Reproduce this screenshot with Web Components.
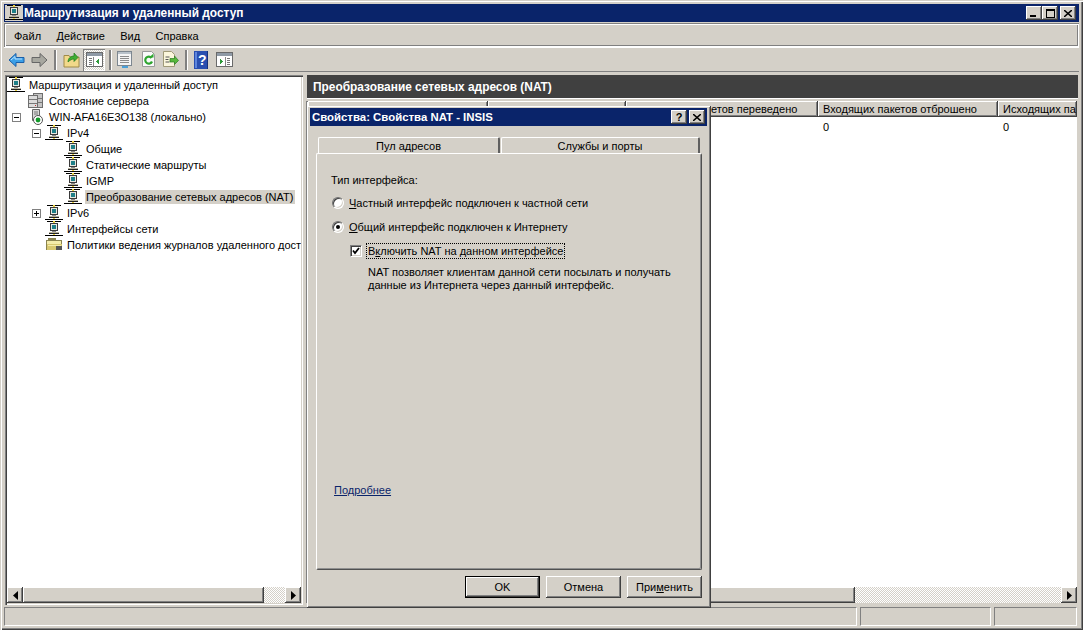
<!DOCTYPE html>
<html lang="ru">
<head>
<meta charset="utf-8">
<title>Маршрутизация и удаленный доступ</title>
<style>
  html, body { margin: 0; padding: 0; background: #d4d0c8; }
  body { font: 11px "Liberation Sans", "Noto Sans", sans-serif; color: #000; }
</style>
</head>
<body>
<app-window>
  <title-bar slot="title" icon="net" buttons="min max close" style="--title-size:11.9px">Маршрутизация и удаленный доступ</title-bar>
  <menu-bar slot="menu"></menu-bar>
  <tool-bar slot="tools"></tool-bar>
  <tree-pane slot="tree">
    <tree-node indent="0" icon="net">Маршрутизация и удаленный доступ</tree-node>
    <tree-node indent="20" icon="server">Состояние сервера</tree-node>
    <tree-node indent="5" gap="6" exp="minus" icon="serverok">WIN-AFA16E3O138 (локально)</tree-node>
    <tree-node indent="25" gap="4" exp="minus" icon="net">IPv4</tree-node>
    <tree-node indent="57" icon="net">Общие</tree-node>
    <tree-node indent="57" icon="net">Статические маршруты</tree-node>
    <tree-node indent="57" icon="net">IGMP</tree-node>
    <tree-node indent="57" icon="net" selected>Преобразование сетевых адресов (NAT)</tree-node>
    <tree-node indent="25" gap="4" exp="plus" icon="net">IPv6</tree-node>
    <tree-node indent="38" icon="net">Интерфейсы сети</tree-node>
    <tree-node indent="38" icon="folder">Политики ведения журналов удаленного доступа</tree-node>
  </tree-pane>
  <list-pane slot="list"></list-pane>
  <status-bar slot="status"></status-bar>
  <nat-dialog slot="dialog"></nat-dialog>
</app-window>

<script>
// значки
const ICONS_SVG = {
  net: `<svg width="18" height="16" viewBox="0 0 18 16" shape-rendering="crispEdges">
    <rect x="2" y="0" width="14" height="1" fill="#000"/><rect x="8" y="0" width="2" height="2" fill="#e8d040"/>
    <rect x="5" y="2" width="8" height="8" fill="#3a3a3a"/><rect x="6" y="3" width="6" height="6" fill="#e8e8e0"/>
    <rect x="7" y="4" width="4" height="4" fill="#1f7f88"/><rect x="7" y="10" width="4" height="1" fill="#888"/>
    <rect x="4" y="11" width="10" height="2" fill="#b9b49f"/><rect x="4" y="12" width="10" height="1" fill="#222"/>
    <rect x="8" y="13" width="2" height="2" fill="#e8d040"/><rect x="0" y="14" width="18" height="1" fill="#000"/></svg>`,
  server: `<svg width="18" height="16" viewBox="0 0 18 16" shape-rendering="crispEdges">
    <rect x="6" y="0" width="10" height="15" fill="#6e6e6e"/><rect x="7" y="1" width="8" height="13" fill="#c4c4c4"/>
    <rect x="1" y="2" width="10" height="13" fill="#6e6e6e"/><rect x="2" y="3" width="8" height="11" fill="#dcdcdc"/>
    <rect x="2" y="6" width="8" height="1" fill="#777"/><rect x="2" y="10" width="8" height="1" fill="#777"/>
    <rect x="11" y="5" width="4" height="1" fill="#777"/><rect x="11" y="9" width="4" height="1" fill="#777"/>
    <rect x="8" y="12" width="1" height="1" fill="#c03030"/></svg>`,
  serverok: `<svg width="18" height="16" viewBox="0 0 18 16">
    <path d="M5.5.5h7v11h-7z" fill="#d8d8d8" stroke="#666"/><path d="M7 3h4M7 5h4" stroke="#777"/>
    <circle cx="11" cy="11" r="4.5" fill="#fff" stroke="#555"/><circle cx="11" cy="11" r="2.4" fill="#129a2a"/></svg>`,
  folder: `<svg width="18" height="16" viewBox="0 0 18 16" shape-rendering="crispEdges">
    <rect x="3" y="1" width="8" height="2" fill="#8a8450"/><rect x="1" y="3" width="16" height="10" fill="#8a8450"/>
    <rect x="2" y="4" width="14" height="3" fill="#f4ecaa"/><rect x="2" y="7" width="15" height="6" fill="#d8c870"/>
    <rect x="3" y="8" width="13" height="1" fill="#f4ecaa"/><rect x="11" y="9" width="6" height="4" fill="#555"/></svg>`,
  back: `<svg width="17" height="16" viewBox="0 0 17 16"><path d="M1 8l7-6.500v4h8v5H8v4z" fill="#3ca0e8" stroke="#1b5fa8"/><path d="M3 8l4-3.500v2.500h7" fill="none" stroke="#b8e2ff"/></svg>`,
  forward: `<svg width="17" height="16" viewBox="0 0 17 16"><path d="M16 8L9 1.500v4H1v5h8v4z" fill="#a8a8a0" stroke="#666"/></svg>`,
  up: `<svg width="17" height="17" viewBox="0 0 17 17"><path d="M1 4.500h5l1 1.500h9v10H1z" fill="#f2d98a" stroke="#a08a48"/><path d="M5 11c0-4 3-6 6-6V2l4 4.500-4 4V8c-2 0-4 1-6 3z" fill="#3fae35" stroke="#1c7a1c" stroke-width=".7"/></svg>`,
  panel: `<svg width="17" height="15" viewBox="0 0 17 15" shape-rendering="crispEdges">
    <rect x=".5" y=".5" width="16" height="14" fill="#fff" stroke="#6a6a6a"/><rect x="1" y="1" width="15" height="3" fill="#8f9aa6"/>
    <rect x="3" y="6" width="3" height="1" fill="#777"/><rect x="3" y="8" width="3" height="1" fill="#777"/><rect x="3" y="10" width="3" height="1" fill="#777"/><rect x="3" y="12" width="3" height="1" fill="#777"/>
    <rect x="7" y="5" width="1" height="9" fill="#888"/><path d="M13 7v5l-3-2.500z" fill="#2f9a3a"/></svg>`,
  panelright: `<svg width="17" height="15" viewBox="0 0 17 15" shape-rendering="crispEdges">
    <rect x=".5" y=".5" width="16" height="14" fill="#fff" stroke="#6a6a6a"/><rect x="1" y="1" width="15" height="3" fill="#8f9aa6"/>
    <rect x="11" y="6" width="3" height="1" fill="#777"/><rect x="11" y="8" width="3" height="1" fill="#777"/><rect x="11" y="10" width="3" height="1" fill="#777"/><rect x="11" y="12" width="3" height="1" fill="#777"/>
    <rect x="9" y="5" width="1" height="9" fill="#888"/><path d="M4 7v5l3-2.500z" fill="#2f9a3a"/></svg>`,
  props: `<svg width="17" height="17" viewBox="0 0 17 17" shape-rendering="crispEdges">
    <rect x="1.500" y=".5" width="14" height="14" fill="#f4f4f4" stroke="#7d8790"/><rect x="2" y="1" width="13" height="2" fill="#b9c2ca"/>
    <rect x="4" y="5" width="9" height="1" fill="#8a8a8a"/><rect x="4" y="7" width="9" height="1" fill="#8a8a8a"/><rect x="4" y="9" width="9" height="1" fill="#8a8a8a"/><rect x="4" y="11" width="9" height="1" fill="#8a8a8a"/>
    <rect x="6" y="15" width="6" height="2" fill="#4aa0d8"/></svg>`,
  refresh: `<svg width="17" height="17" viewBox="0 0 17 17"><path d="M2.500.5h9l3 3v12h-12z" fill="#fafafa" stroke="#9a9a9a"/><path d="M11.500 7a3.500 3.500 0 1 0 .5 3.500" fill="none" stroke="#2fa52f" stroke-width="2.200"/><path d="M9 6.500h4.500V2.500z" fill="#2fa52f"/></svg>`,
  exportlist: `<svg width="17" height="17" viewBox="0 0 17 17"><path d="M1.500.5h8l3 3v12h-11z" fill="#fbf6dc" stroke="#a09a78"/><path d="M3.500 6h4M3.500 8.500h3M3.500 11h4" stroke="#555"/><path d="M8 7.500h4.500V5l4 4.500-4 4V11H8z" fill="#57b83c" stroke="#2c7d22" stroke-width=".7"/></svg>`,
  help: `<svg width="14" height="18" viewBox="0 0 14 18" shape-rendering="crispEdges"><rect width="14" height="18" fill="#2a4fb0"/><rect x="1" y="1" width="2" height="16" fill="#5f86dc"/><rect x="13" width="1" height="18" fill="#16307c"/></svg>`
};

// окно приложения
const appWindowTemplate = document.createElement("template");
appWindowTemplate.innerHTML = `
  <style>
    :host {
      display: flex; flex-direction: column; position: relative; box-sizing: border-box;
      width: 1083px; height: 630px; padding: 4px 4px 2px 4px; overflow: hidden; background: #d4d0c8;
      box-shadow: inset 1px 1px #d4d0c8, inset 2px 2px #fff, inset -1px -1px #404040, inset -2px -2px #808080;
    }
    .main { display: flex; height: 531px; margin-top: 3px; gap: 2px; padding-left: 1px; }
  </style>
  <slot name="title"></slot>
  <slot name="menu"></slot>
  <slot name="tools"></slot>
  <div class="main"><slot name="tree"></slot><slot name="list"></slot></div>
  <slot name="status"></slot>
  <slot name="dialog"></slot>
`;
class AppWindow extends HTMLElement {
  constructor() {
    super();
    this._shadowRoot = this.attachShadow({ mode: "open" });
    this._shadowRoot.appendChild(appWindowTemplate.content.cloneNode(true));
  }
}

// кнопка заголовка
const captionButtonTemplate = document.createElement("template");
captionButtonTemplate.innerHTML = `
  <style>
    :host {
      display: flex; align-items: center; justify-content: center; box-sizing: border-box;
      width: 16px; height: 14px; background: #d4d0c8; color: #000; font: bold 11px "Liberation Sans", sans-serif;
      box-shadow: inset -1px -1px #404040, inset 1px 1px #fff, inset -2px -2px #808080;
    }
  </style>
  <slot></slot>
`;
class CaptionButton extends HTMLElement {
  constructor() {
    super();
    this._shadowRoot = this.attachShadow({ mode: "open" });
    this._shadowRoot.appendChild(captionButtonTemplate.content.cloneNode(true));
    const kind = this.getAttribute("kind");
    const glyphs = {
      min: `<svg width="8" height="7" viewBox="0 0 8 7" shape-rendering="crispEdges"><rect x="0" y="5" width="6" height="2"/></svg>`,
      max: `<svg width="9" height="9" viewBox="0 0 9 9" fill="none" shape-rendering="crispEdges"><path d="M.5 1.500h8v7h-8z" stroke="#000"/><rect width="9" height="2" fill="#000"/></svg>`,
      close: `<svg width="8" height="7" viewBox="0 0 8 7"><path d="M0 0l8 7M8 0L0 7" stroke="#000" stroke-width="1.500"/></svg>`,
      help: `<span>?</span>`
    };
    this._shadowRoot.appendChild(document.createRange().createContextualFragment(glyphs[kind]));
  }
}

// заголовок окна
const titleBarTemplate = document.createElement("template");
titleBarTemplate.innerHTML = `
  <style>
    :host {
      display: flex; align-items: center; height: 18px; flex: none; background: #0a246a; color: #fff;
      font: bold var(--title-size, 11.4px) "Liberation Sans", sans-serif; padding-left: 1px; padding-right: 3px;
    }
    .ico { display: flex; width: 18px; flex: none; background: #d4d0c8; }
    .text { flex: 1; white-space: nowrap; overflow: hidden; padding-left: 1px; }
    .btns { display: flex; }
    caption-button[kind="close"] { margin-left: 2px; }
  </style>
  <span class="ico"></span><span class="text"><slot></slot></span><span class="btns"></span>
`;
class TitleBar extends HTMLElement {
  constructor() {
    super();
    this._shadowRoot = this.attachShadow({ mode: "open" });
    this._shadowRoot.appendChild(titleBarTemplate.content.cloneNode(true));
    const icon = this.getAttribute("icon");
    const ico = this._shadowRoot.querySelector(".ico");
    if (icon) ico.innerHTML = ICONS_SVG[icon];
    else ico.style.display = "none";
    this._shadowRoot.querySelector(".btns").innerHTML = (this.getAttribute("buttons") || "")
      .split(" ")
      .map((k) => `<caption-button kind="${k}"></caption-button>`)
      .join("");
  }
}

// меню
const menuBarTemplate = document.createElement("template");
menuBarTemplate.innerHTML = `
  <style>
    :host {
      display: flex; align-items: center; gap: 15.4px; box-sizing: border-box; flex: none; height: 24px;
      margin-top: 1px; padding: 1px 10px 0; color: #000; white-space: nowrap;
      box-shadow: inset 1px 1px #808080, inset -1px -1px #fff, inset 2px 2px #fff, inset -2px -2px #808080;
    }
  </style>
  <span>Файл</span><span>Действие</span><span>Вид</span><span>Справка</span>
`;
class MenuBar extends HTMLElement {
  constructor() {
    super();
    this._shadowRoot = this.attachShadow({ mode: "open" });
    this._shadowRoot.appendChild(menuBarTemplate.content.cloneNode(true));
  }
}

// панель инструментов
const toolBarTemplate = document.createElement("template");
toolBarTemplate.innerHTML = `
  <style>
    :host {
      display: flex; align-items: center; box-sizing: border-box; flex: none; height: 25px; padding-left: 4px;
      box-shadow: inset 0 1px #fff, inset 0 -1px #808080;
    }
    span { display: flex; align-items: center; justify-content: center; flex: none; }
    .sep { width: 2px; height: 20px; background: #808080; box-shadow: 1px 0 #fff; }
    .on {
      width: 22px; height: 22px;
      background: repeating-conic-gradient(#fff 0 25%, #d4d0c8 0 50%) 0 0/2px 2px;
      box-shadow: inset 1px 1px #808080, inset -1px -1px #fff;
    }
    .book { position: relative; }
    .book b { position: absolute; left: 4px; top: 1px; color: #fff; font: bold 14px "Liberation Sans", sans-serif; }
  </style>
  <span style="margin-right:6px">${ICONS_SVG.back}</span>
  <span style="margin-right:6px">${ICONS_SVG.forward}</span>
  <span class="sep" style="margin-right:7px"></span>
  <span style="margin-right:3px">${ICONS_SVG.up}</span>
  <span class="on" style="margin-right:4px">${ICONS_SVG.panel}</span>
  <span class="sep" style="margin-right:5px"></span>
  <span style="margin-right:7px">${ICONS_SVG.props}</span>
  <span style="margin-right:5px">${ICONS_SVG.refresh}</span>
  <span style="margin-right:6px">${ICONS_SVG.exportlist}</span>
  <span class="sep" style="margin-right:7px"></span>
  <span class="book" style="margin-right:8px">${ICONS_SVG.help}<b>?</b></span>
  <span>${ICONS_SVG.panelright}</span>
`;
class ToolBar extends HTMLElement {
  constructor() {
    super();
    this._shadowRoot = this.attachShadow({ mode: "open" });
    this._shadowRoot.appendChild(toolBarTemplate.content.cloneNode(true));
  }
}

// полоса прокрутки
const hScrollTemplate = document.createElement("template");
hScrollTemplate.innerHTML = `
  <style>
    :host {
      display: flex; flex: none; height: 16px;
      background: repeating-conic-gradient(#fff 0 25%, #d4d0c8 0 50%) 0 0/2px 2px;
    }
    .btn, .thumb {
      box-sizing: border-box; height: 16px; flex: none; background: #d4d0c8;
      box-shadow: inset -1px -1px #404040, inset 1px 1px #fff, inset -2px -2px #808080;
    }
    .btn { width: 16px; display: flex; align-items: center; justify-content: center; }
    .track { flex: 1; display: flex; }
  </style>
  <div class="btn"><svg width="5" height="9" viewBox="0 0 5 9"><path d="M5 0v9L0 4.500z"/></svg></div>
  <div class="track"><div class="thumb"></div></div>
  <div class="btn"><svg width="5" height="9" viewBox="0 0 5 9"><path d="M0 0v9l5-4.500z"/></svg></div>
`;
class HScroll extends HTMLElement {
  constructor() {
    super();
    this._shadowRoot = this.attachShadow({ mode: "open" });
    this._shadowRoot.appendChild(hScrollTemplate.content.cloneNode(true));
    this._shadowRoot.querySelector(".thumb").style.width = this.getAttribute("thumb") + "px";
  }
}

// дерево
const treePaneTemplate = document.createElement("template");
treePaneTemplate.innerHTML = `
  <style>
    :host {
      display: flex; flex-direction: column; box-sizing: border-box; flex: none; width: 298px; height: 530px;
      padding: 2px; background: #fff;
      box-shadow: inset 1px 1px #808080, inset 2px 2px #404040, inset -1px -1px #fff, inset -2px -2px #d4d0c8;
    }
    .nodes { flex: 1; overflow: hidden; }
  </style>
  <div class="nodes"><slot></slot></div>
  <h-scroll thumb="241"></h-scroll>
`;
class TreePane extends HTMLElement {
  constructor() {
    super();
    this._shadowRoot = this.attachShadow({ mode: "open" });
    this._shadowRoot.appendChild(treePaneTemplate.content.cloneNode(true));
  }
}

const treeNodeTemplate = document.createElement("template");
treeNodeTemplate.innerHTML = `
  <style>
    :host { display: flex; align-items: center; height: 16px; white-space: nowrap; }
    .exp {
      display: none; box-sizing: border-box; width: 9px; height: 9px; flex: none;
      border: 1px solid #808080; background: #fff; align-items: center; justify-content: center;
    }
    .ico { display: flex; width: 18px; flex: none; margin-right: 3px; }
    .label { padding-left: 1px; padding-right: 2px; }
    :host([selected]) .label { background: #d4d0c8; padding: 1px 2px 1px 1px; }
  </style>
  <span class="exp"></span><span class="ico"></span><span class="label"><slot></slot></span>
`;
class TreeNode extends HTMLElement {
  constructor() {
    super();
    this._shadowRoot = this.attachShadow({ mode: "open" });
    this._shadowRoot.appendChild(treeNodeTemplate.content.cloneNode(true));
    this.style.paddingLeft = (this.getAttribute("indent") || 0) + "px";
    this._shadowRoot.querySelector(".ico").innerHTML = ICONS_SVG[this.getAttribute("icon")];
    const exp = this.getAttribute("exp");
    if (exp) {
      const box = this._shadowRoot.querySelector(".exp");
      box.style.display = "flex";
      box.style.marginRight = this.getAttribute("gap") + "px";
      box.innerHTML = exp === "plus"
        ? `<svg width="5" height="5" viewBox="0 0 5 5" shape-rendering="crispEdges"><path d="M0 2h5v1H0zM2 0h1v5H2z"/></svg>`
        : `<svg width="5" height="5" viewBox="0 0 5 5" shape-rendering="crispEdges"><path d="M0 2h5v1H0z"/></svg>`;
    }
  }
}

// правая панель со списком
const listPaneTemplate = document.createElement("template");
listPaneTemplate.innerHTML = `
  <style>
    :host {
      display: flex; flex-direction: column; box-sizing: border-box; flex: 1; min-width: 0; height: 530px;
      padding: 0 2px 2px 1px;
    }
    .band {
      flex: none; height: 23px; margin-left: 1px; margin-right: -1px; background: #404040; color: #fff;
      font-weight: bold; font-size: 11.9px; line-height: 24px; padding-left: 6px; border-bottom: 1px solid #fff;
    }
    .list { flex: 1; display: flex; flex-direction: column; min-height: 0; background: #fff; margin-top: 2px;
      box-shadow: inset 1px 0 #808080, inset 0 1px #808080; padding-left: 2px; }
    .head { display: flex; flex: none; height: 16px; overflow: hidden; }
    .col {
      box-sizing: border-box; flex: none; overflow: hidden; white-space: nowrap; padding-left: 5px; line-height: 17px;
      background: #d4d0c8; box-shadow: inset -1px -1px #404040, inset 1px 1px #fff, inset -2px -2px #808080;
    }
    .rows { flex: 1; min-height: 0; }
    .row { display: flex; height: 18px; line-height: 21px; }
    .cell { flex: none; padding-left: 5px; box-sizing: border-box; }
    .c1 { width: 180px; } .c2 { width: 138px; } .c3 { width: 192px; } .c4 { width: 180px; } .c5 { width: 79px; }
    /* начало этой колонки закрыто диалогом */
    .col.c3 { padding-left: 85px; }
  </style>
  <div class="band">Преобразование сетевых адресов (NAT)</div>
  <div class="list">
    <div class="head">
      <div class="col c1"></div>
      <div class="col c2"></div>
      <div class="col c3">етов переведено</div>
      <div class="col c4">Входящих пакетов отброшено</div>
      <div class="col c5">Исходящих па</div>
    </div>
    <div class="rows">
      <div class="row">
        <div class="cell c1"></div><div class="cell c2"></div><div class="cell c3"></div>
        <div class="cell c4">0</div><div class="cell c5">0</div>
      </div>
    </div>
    <h-scroll thumb="531"></h-scroll>
  </div>
`;
class ListPane extends HTMLElement {
  constructor() {
    super();
    this._shadowRoot = this.attachShadow({ mode: "open" });
    this._shadowRoot.appendChild(listPaneTemplate.content.cloneNode(true));
  }
}

// строка состояния
const statusBarTemplate = document.createElement("template");
statusBarTemplate.innerHTML = `
  <style>
    :host { display: flex; gap: 3px; flex: none; height: 19px; margin-top: 1px; padding-right: 2px; }
    div { box-sizing: border-box; height: 19px; border: 1px solid; border-color: #808080 #fff #fff #808080; }
    .a { flex: 1; } .b { width: 131px; } .c { width: 83px; }
  </style>
  <div class="a"></div><div class="b"></div><div class="c"></div>
`;
class StatusBar extends HTMLElement {
  constructor() {
    super();
    this._shadowRoot = this.attachShadow({ mode: "open" });
    this._shadowRoot.appendChild(statusBarTemplate.content.cloneNode(true));
  }
}

// кнопка диалога
const dlgButtonTemplate = document.createElement("template");
dlgButtonTemplate.innerHTML = `
  <style>
    :host {
      display: flex; align-items: center; justify-content: center; box-sizing: border-box;
      width: 75px; height: 22px; background: #d4d0c8; color: #000;
      box-shadow: inset -1px -1px #404040, inset 1px 1px #fff, inset -2px -2px #808080;
    }
    :host([primary]) {
      box-shadow: inset 0 0 0 1px #000, inset -2px -2px #404040, inset 2px 2px #fff, inset -3px -3px #808080;
    }
  </style>
  <slot></slot>
`;
class DlgButton extends HTMLElement {
  constructor() {
    super();
    this._shadowRoot = this.attachShadow({ mode: "open" });
    this._shadowRoot.appendChild(dlgButtonTemplate.content.cloneNode(true));
  }
}

// переключатель и флажок
const optionRowTemplate = document.createElement("template");
optionRowTemplate.innerHTML = `
  <style>
    :host { display: flex; align-items: center; height: 16px; white-space: nowrap; }
    .radio {
      box-sizing: border-box; width: 12px; height: 12px; flex: none; border-radius: 50%; background: #fff; margin-right: 5px;
      border: 1px solid; border-color: #707070 #fff #fff #707070; box-shadow: inset 1px 1px #404040, inset -1px -1px #d4d0c8;
      display: flex; align-items: center; justify-content: center;
    }
    .dot { width: 4px; height: 4px; border-radius: 50%; background: #000; }
    .check {
      box-sizing: border-box; width: 12px; height: 12px; flex: none; background: #fff; margin-right: 6px; display: flex;
      border: 1px solid; border-color: #808080 #fff #fff #808080; box-shadow: inset 1px 1px #404040, inset -1px -1px #d4d0c8;
      align-items: center; justify-content: center;
    }
    :host([focused]) .label { outline: 1px dotted #000; outline-offset: 1px; }
  </style>
  <span class="mark"></span><span class="label"><slot></slot></span>
`;
class OptionRow extends HTMLElement {
  constructor() {
    super();
    this._shadowRoot = this.attachShadow({ mode: "open" });
    this._shadowRoot.appendChild(optionRowTemplate.content.cloneNode(true));
    const mark = this._shadowRoot.querySelector(".mark");
    const on = this.hasAttribute("checked");
    if (this.getAttribute("type") === "check") {
      mark.className = "check";
      if (on) mark.innerHTML = `<svg width="8" height="8" viewBox="0 0 8 8"><path d="M1 3.500l2 2.500 4-5" fill="none" stroke="#000" stroke-width="1.800"/></svg>`;
    } else {
      mark.className = "radio";
      if (on) mark.innerHTML = `<span class="dot"></span>`;
    }
  }
}

// диалог свойств NAT
const natDialogTemplate = document.createElement("template");
natDialogTemplate.innerHTML = `
  <style>
    :host {
      position: absolute; left: 307px; top: 106px; width: 404px; height: 502px; box-sizing: border-box;
      display: flex; flex-direction: column; padding: 2px 4px 3px 3px; background: #d4d0c8; color: #000;
      box-shadow: inset -1px -1px #404040, inset 1px 1px #fff, inset -2px -2px #808080;
    }
    title-bar { flex: none; padding-left: 1px; padding-right: 2px; }
    .tabs { display: flex; flex: none; margin: 11px 0 0 8px; gap: 1px; height: 16px; }
    .tab {
      box-sizing: border-box; height: 16px; text-align: center; line-height: 17px; overflow: hidden;
      border-top: 1px solid #fff; border-left: 1px solid #fff; border-right: 2px solid #606060; border-top-left-radius: 2px; border-top-right-radius: 2px;
    }
    .t1 { width: 182px; } .t2 { width: 199px; }
    .panel {
      flex: none; box-sizing: border-box; height: 417px; margin-left: 6px; width: 386px; display: flex; flex-direction: column;
      padding: 18px 14px 73px 15px; border-radius: 2px; border: 1px solid; border-color: #fff #505050 #505050 #fff;
      box-shadow: inset -1px -1px #909090;
    }
    .cap { height: 16px; line-height: 16px; margin: 0 0 7px -1px; }
    option-row { margin-bottom: 8px; }
    .sub { margin: 0 0 0 18px; }
    .desc { margin: 7px 0 0 36px; line-height: 13px; }
    .link { margin-top: auto; color: #0a246a; text-decoration: underline; margin-left: 2px; }
    .btns { display: flex; justify-content: flex-end; gap: 6px; flex: none; margin: 6px 5px 0 0; }
  </style>
  <title-bar buttons="help close">Свойства: Свойства NAT - INSIS</title-bar>
  <div class="tabs"><div class="tab t1">Пул адресов</div><div class="tab t2">Службы и порты</div></div>
  <div class="panel">
    <div class="cap">Тип интерфейса:</div>
    <option-row type="radio"><u>Ч</u>астный интерфейс подключен к частной сети</option-row>
    <option-row type="radio" checked><u>О</u>бщий интерфейс подключен к Интернету</option-row>
    <option-row class="sub" type="check" checked focused>В<u>к</u>лючить NAT на данном интерфейсе</option-row>
    <div class="desc">NAT позволяет клиентам данной сети посылать и получать<br>данные из Интернета через данный интерфейс.</div>
    <div class="link">Подробнее</div>
  </div>
  <div class="btns">
    <dlg-button primary>OK</dlg-button>
    <dlg-button>Отмена</dlg-button>
    <dlg-button>При<u>м</u>енить</dlg-button>
  </div>
`;
class NatDialog extends HTMLElement {
  constructor() {
    super();
    this._shadowRoot = this.attachShadow({ mode: "open" });
    this._shadowRoot.appendChild(natDialogTemplate.content.cloneNode(true));
  }
}

window.customElements.define("app-window", AppWindow);
window.customElements.define("caption-button", CaptionButton);
window.customElements.define("title-bar", TitleBar);
window.customElements.define("menu-bar", MenuBar);
window.customElements.define("tool-bar", ToolBar);
window.customElements.define("h-scroll", HScroll);
window.customElements.define("tree-pane", TreePane);
window.customElements.define("tree-node", TreeNode);
window.customElements.define("list-pane", ListPane);
window.customElements.define("status-bar", StatusBar);
window.customElements.define("dlg-button", DlgButton);
window.customElements.define("option-row", OptionRow);
window.customElements.define("nat-dialog", NatDialog);
</script>
</body>
</html>
